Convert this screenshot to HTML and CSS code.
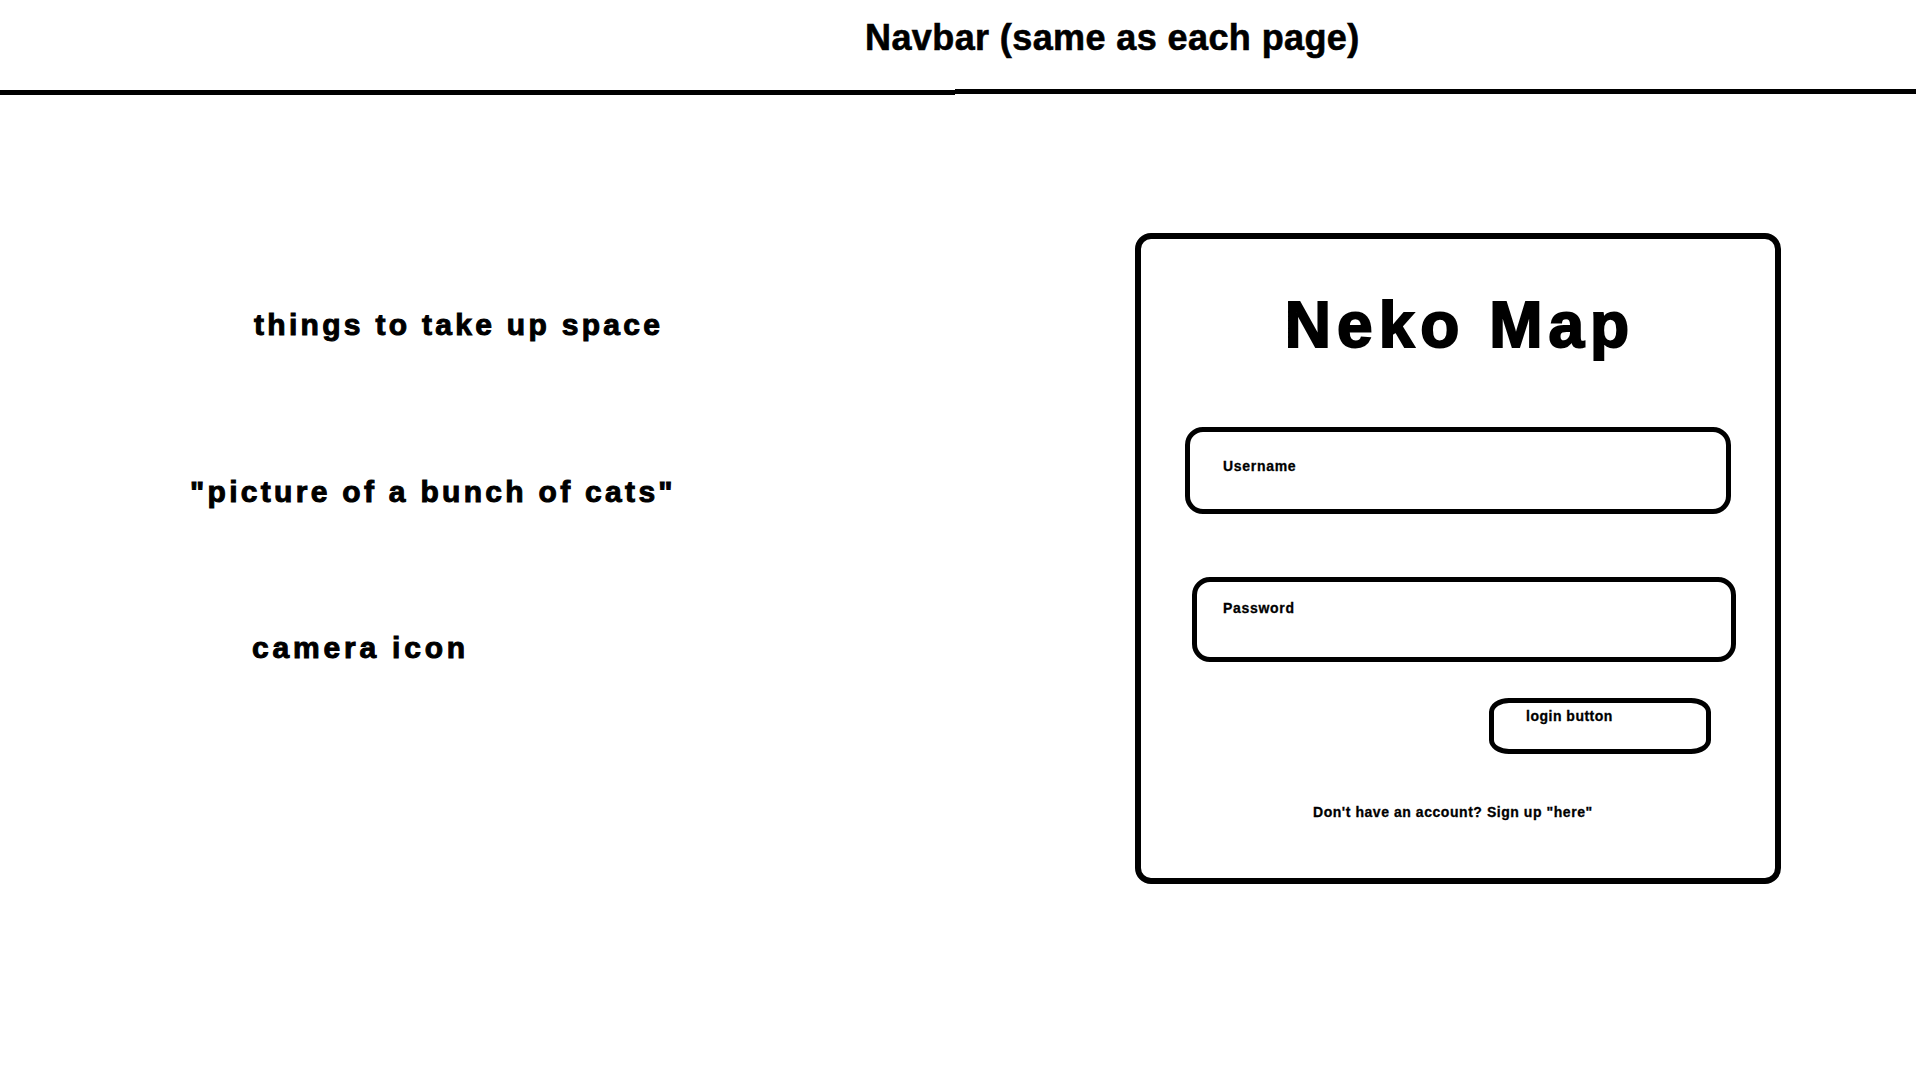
FILE: index.html
```html
<!DOCTYPE html>
<html lang="en">
<head>
  <meta charset="UTF-8" />
  <meta name="viewport" content="width=device-width, initial-scale=1.0" />
  <title>Neko Map - Login</title>
  <link rel="stylesheet" href="styles.css">
</head>
<body>

<header class="navbar">
  <div class="navbar-title">Navbar (same as each page)</div>
  <div class="rule">
    <div class="rule-left"></div>
    <div class="rule-right"></div>
  </div>
</header>

<main class="page">
  <section class="filler">
    <div class="filler-text things">things to take up space</div>
    <div class="filler-text cats">"picture of a bunch of cats"</div>
    <div class="filler-text camera">camera icon</div>
  </section>

  <section class="login-card">
    <h1 class="logo">Neko Map</h1>
    <div class="field username">
      <span class="field-label">Username</span>
    </div>
    <div class="field password">
      <span class="field-label">Password</span>
    </div>
    <button class="login-btn">login button</button>
    <p class="signup">Don't have an account? Sign up "here"</p>
  </section>
</main>

</body>
</html>
```

FILE: styles.css
```css
body {
  margin: 0;
  background: #fff;
  color: #000;
  font-family: 'Liberation Sans', Arial, sans-serif;
  font-weight: bold;
  overflow: hidden;
  height: 100vh;
}

/* navbar */
.navbar {
  padding-top: 20px;
}
.navbar-title {
  padding-left: 865px;
  font-size: 36px;
  line-height: 1;
  letter-spacing: 0.4px;
  -webkit-text-stroke: 0.6px #000;
}
.rule {
  display: flex;
  align-items: flex-start;
  width: 1916px;
  margin-top: 33px;
}
.rule-left {
  width: 955px;
  height: 5px;
  margin-top: 1px;
  background: #000;
}
.rule-right {
  flex: 1;
  height: 5px;
  background: #000;
}

/* page body */
.page {
  display: flex;
  align-items: flex-start;
  padding-top: 138px;
}
.filler {
  flex: 0 0 1135px;
  display: flex;
  flex-direction: column;
  padding-top: 77px;
}
.filler-text {
  font-size: 30px;
  line-height: 1;
  letter-spacing: 3.3px;
  -webkit-text-stroke: 1px #000;
}
.things {
  margin-left: 254px;
}
.cats {
  margin-left: 190px;
  margin-top: 137px;
}
.camera {
  margin-left: 252px;
  margin-top: 126px;
  letter-spacing: 3.8px;
}

/* login card */
.login-card {
  box-sizing: border-box;
  width: 646px;
  height: 651px;
  border: 6px solid #000;
  border-radius: 16px;
  padding-top: 54px;
  display: flex;
  flex-direction: column;
  align-items: flex-start;
}
.logo {
  align-self: stretch;
  margin: 0;
  text-align: center;
  font-size: 64px;
  line-height: 1;
  letter-spacing: 6px;
  padding-left: 4px;
  -webkit-text-stroke: 2px #000;
}
.field {
  box-sizing: border-box;
  border: 5px solid #000;
  border-radius: 18px;
}
.field-label {
  display: block;
  font-size: 14px;
  line-height: 1;
  letter-spacing: 0.7px;
  -webkit-text-stroke: 0.3px #000;
}
.username {
  width: 546px;
  height: 87px;
  margin: 70px 0 0 44px;
  padding: 27px 0 0 33px;
}
.password {
  width: 544px;
  height: 85px;
  margin: 63px 0 0 51px;
  padding: 19px 0 0 26px;
}
.login-btn {
  box-sizing: border-box;
  width: 222px;
  height: 56px;
  margin: 36px 0 0 348px;
  padding: 6px 0 0 32px;
  border: 5px solid #000;
  border-radius: 20px / 14px;
  background: #fff;
  color: #000;
  font-family: inherit;
  font-weight: bold;
  font-size: 14px;
  line-height: 1;
  letter-spacing: 0.5px;
  -webkit-text-stroke: 0.3px #000;
  display: flex;
  align-items: flex-start;
}
.signup {
  margin: 51px 0 0 172px;
  font-size: 14px;
  line-height: 1;
  letter-spacing: 0.55px;
  -webkit-text-stroke: 0.3px #000;
}
```
